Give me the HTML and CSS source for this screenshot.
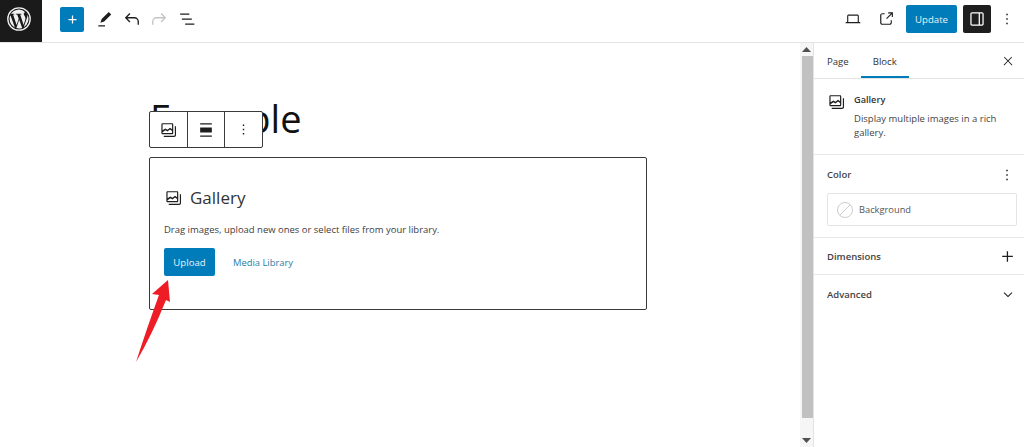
FILE: index.html
```html
<!DOCTYPE html>
<html lang="en">
<head>
<meta charset="utf-8">
<title>Example</title>
<link rel="stylesheet" href="styles.css">
</head>
<body>
<div class="app">
  <header class="topbar">
    <div class="topbar-left">
      <a class="wp-logo">
        <svg viewBox="0 0 24 24" width="24" height="24"><circle cx="12" cy="12" r="11.2" fill="none" stroke="#f0f0f0" stroke-width="1.3"/><path fill="#f0f0f0" d="M2.6 12c0 3.7 2.2 6.9 5.3 8.5L3.4 8.2A9.4 9.4 0 0 0 2.6 12zm15.8-.5c0-1.200-.4-2-.8-2.600-.5-.8-.9-1.400-.9-2.100 0-.8.6-1.600 1.500-1.600h.1A9.400 9.400 0 0 0 4 6.800h.6c1 0 2.500-.1 2.500-.1.500 0 .6.700.1.800 0 0-.5.100-1.100.1l3.500 10.300 2.100-6.200-1.500-4.100c-.5 0-1-.1-1-.1-.5 0-.5-.8 0-.8 0 0 1.600.1 2.500.1 1 0 2.500-.1 2.500-.1.500 0 .6.700.1.800 0 0-.5.100-1.100.1l3.400 10.300 1-3.200c.4-1.300.8-2.200.8-3zm-6.200 1.300-2.800 8.300a9.400 9.400 0 0 0 5.800-.2l-.1-.1zm8.100-5.400.1 1c0 .9-.2 2-.7 3.300l-2.900 8.300A9.400 9.400 0 0 0 20.300 7.400z"/></svg>
      </a>
      <div class="tools">
        <button class="inserter"><svg viewBox="0 0 24 24" width="15" height="15"><path fill="#fff" d="M11 5.500h2V11h5.500v2H13v5.500h-2V13H5.500v-2H11z"/></svg></button>
        <button class="icon-btn"><svg viewBox="0 0 24 24" width="20" height="20"><path fill="#1e1e1e" d="M19.500 6.500 16.500 3.500 8 12l-1.500 4.500 4.500-1.500zM4 19.500h8V21H4z"/></svg></button>
        <button class="icon-btn"><svg viewBox="0 0 24 24" width="20" height="20"><path fill="none" stroke="#1e1e1e" stroke-width="1.600" d="M9.500 5.500 4.500 10.500l5 5M4.500 10.500H15a4.500 4.500 0 0 1 4.500 4.500v4"/></svg></button>
        <button class="icon-btn"><svg viewBox="0 0 24 24" width="20" height="20"><path fill="none" stroke="#c4c4c4" stroke-width="1.600" d="M14.500 5.500l5 5-5 5M19.500 10.500H9A4.500 4.500 0 0 0 4.500 15v4"/></svg></button>
        <button class="icon-btn"><svg viewBox="0 0 24 24" width="20" height="20"><path fill="#1e1e1e" d="M5 5.300h11v1.500H5zM7 11.300h12v1.500H7zM11 17.300h11v1.500H11z"/></svg></button>
      </div>
    </div>
    <div class="topbar-right">
      <button class="icon-btn wide"><svg viewBox="0 0 24 24" width="18" height="18"><path fill="#1e1e1e" d="M20.500 16h-.7V8c0-1.100-.9-2-2-2H6.200c-1.100 0-2 .9-2 2v8h-.7c-.8 0-1.500.7-1.500 1.500h20c0-.8-.7-1.500-1.500-1.500zM5.700 8c0-.3.200-.5.500-.5h11.600c.3 0 .5.200.5.500v8H5.700z"/></svg></button>
      <button class="icon-btn wide"><svg viewBox="0 0 24 24" width="18" height="18"><path fill="#1e1e1e" d="M18.200 17c0 .7-.6 1.200-1.200 1.200H7c-.7 0-1.200-.6-1.200-1.200V7c0-.7.600-1.200 1.200-1.200h3.200V4.200H7C5.500 4.200 4.200 5.500 4.200 7v10c0 1.500 1.300 2.800 2.800 2.800h10c1.500 0 2.800-1.300 2.800-2.800v-3.200h-1.500V17zM14.900 3v1.500h3.700l-6.400 6.400 1.100 1.100 6.400-6.400v3.700h1.500V3z"/></svg></button>
      <button class="primary update">Update</button>
      <button class="settings"><svg viewBox="0 0 24 24" width="20" height="20"><path fill="#fff" d="M18 4H6c-1.100 0-2 .9-2 2v12c0 1.100.9 2 2 2h12c1.100 0 2-.9 2-2V6c0-1.100-.9-2-2-2zM5.500 18V6c0-.3.200-.5.500-.5h8v13H6c-.3 0-.5-.2-.5-.5zm13 0c0 .3-.2.500-.5.500h-2.500v-13H18c.3 0 .5.200.5.500z"/></svg></button>
      <button class="icon-btn kebab"><svg viewBox="0 0 24 24" width="18" height="18"><path fill="#1e1e1e" d="M13 19h-2v-2h2zm0-6h-2v-2h2zm0-6h-2V5h2z"/></svg></button>
    </div>
  </header>

  <div class="workspace">
    <main class="canvas">
      <h1 class="post-title">Example</h1>
      <div class="block-toolbar">
        <button class="tool"><svg viewBox="0 0 24 24" width="19" height="19"><path fill="#1e1e1e" d="M16.400 4H4.600C3.700 4 3 4.700 3 5.600v10.800c0 .9.700 1.600 1.600 1.600h11.800c.9 0 1.600-.7 1.600-1.600V5.600c0-.9-.7-1.600-1.600-1.600zM4.500 5.600c0-.1 0-.1.100-.1h11.800c.1 0 .1 0 .1.100v6l-2.600-1.900-3.200 2.600-2.600-1.700-3.600 2.500zm11.900 10.900H4.600c-.1 0-.1 0-.1-.1v-1l3.700-2.600 2.500 1.700 3.200-2.600 2.600 1.900v2.600c0 .1 0 .1-.1.100zM20 8v11c0 .6-.4 1-1 1H6v1.500h13c1.400 0 2.500-1.100 2.500-2.500V8z"/></svg></button>
        <button class="tool"><svg viewBox="0 0 24 24" width="20" height="20"><path fill="#1e1e1e" d="M5 4h14v1.500H5zM5 9h14v6H5zM5 18.500h14V20H5z"/></svg></button>
        <button class="tool"><svg viewBox="0 0 24 24" width="17" height="17"><path fill="#1e1e1e" d="M13 19h-2v-2h2zm0-6h-2v-2h2zm0-6h-2V5h2z"/></svg></button>
      </div>
      <section class="placeholder">
        <div class="placeholder-label">
          <svg viewBox="0 0 24 24" width="19" height="19"><path fill="#1e1e1e" d="M16.400 4H4.600C3.700 4 3 4.700 3 5.600v10.800c0 .9.700 1.600 1.600 1.600h11.800c.9 0 1.600-.7 1.600-1.600V5.600c0-.9-.7-1.600-1.600-1.600zM4.500 5.600c0-.1 0-.1.100-.1h11.800c.1 0 .1 0 .1.100v6l-2.600-1.900-3.200 2.600-2.600-1.700-3.600 2.500zm11.900 10.900H4.600c-.1 0-.1 0-.1-.1v-1l3.700-2.600 2.500 1.700 3.200-2.600 2.600 1.900v2.600c0 .1 0 .1-.1.100zM20 8v11c0 .6-.4 1-1 1H6v1.500h13c1.400 0 2.500-1.100 2.500-2.500V8z"/></svg>
          <span>Gallery</span>
        </div>
        <p class="placeholder-text">Drag images, upload new ones or select files from your library.</p>
        <div class="placeholder-actions">
          <button class="primary upload">Upload</button>
          <a class="link">Media Library</a>
        </div>
      </section>
      <svg class="arrow" viewBox="0 0 50 100" width="50" height="100"><path fill="#ee1c25" d="M2 87 Q14 50 25 20 L18 19 L34 5 L36 27 L32 25 Q18 60 2 87Z"/></svg>
    </main>

    <div class="scrollbar">
      <div class="scroll-btn"><svg viewBox="0 0 9 5" width="9" height="5"><path fill="#505050" d="M4.500 0 9 5H0z"/></svg></div>
      <div class="scroll-track"><div class="scroll-thumb"></div></div>
      <div class="scroll-btn"><svg viewBox="0 0 9 5" width="9" height="5"><path fill="#505050" d="M0 0h9L4.500 5z"/></svg></div>
    </div>

    <aside class="sidebar">
      <div class="tabs">
        <div class="tab-group">
          <span class="tab">Page</span>
          <span class="tab active">Block</span>
        </div>
        <svg viewBox="0 0 24 24" width="14" height="14"><path fill="#1e1e1e" d="m13 11.800 6.100-6.300-1-1-6.100 6.200-6.100-6.200-1 1 6.100 6.300-6.500 6.700 1 1 6.500-6.600 6.500 6.600 1-1z"/></svg>
      </div>
      <div class="panel block-card">
        <svg viewBox="0 0 24 24" width="19" height="19"><path fill="#1e1e1e" d="M16.400 4H4.600C3.700 4 3 4.700 3 5.600v10.800c0 .9.700 1.600 1.600 1.600h11.800c.9 0 1.600-.7 1.600-1.600V5.600c0-.9-.7-1.600-1.600-1.600zM4.500 5.600c0-.1 0-.1.100-.1h11.800c.1 0 .1 0 .1.100v6l-2.600-1.900-3.200 2.600-2.600-1.700-3.600 2.500zm11.900 10.900H4.600c-.1 0-.1 0-.1-.1v-1l3.700-2.600 2.500 1.700 3.200-2.600 2.600 1.900v2.600c0 .1 0 .1-.1.100zM20 8v11c0 .6-.4 1-1 1H6v1.500h13c1.400 0 2.500-1.100 2.500-2.500V8z"/></svg>
        <div class="card-body">
          <div class="card-title">Gallery</div>
          <div class="card-desc">Display multiple images in a rich gallery.</div>
        </div>
      </div>
      <div class="panel color">
        <div class="panel-head">
          <span class="panel-title">Color</span>
          <svg viewBox="0 0 24 24" width="18" height="18"><path fill="#1e1e1e" d="M13 19h-2v-2h2zm0-6h-2v-2h2zm0-6h-2V5h2z"/></svg>
        </div>
        <div class="color-item">
          <svg viewBox="0 0 16 16" width="16" height="16"><circle cx="8" cy="8" r="7.500" fill="none" stroke="#ccc"/><path stroke="#ccc" d="M3 13 13 3"/></svg>
          <span>Background</span>
        </div>
      </div>
      <div class="panel row dimensions">
        <span class="panel-title">Dimensions</span>
        <svg viewBox="0 0 24 24" width="17" height="17"><path fill="#1e1e1e" d="M11 4.500h1.800V11h6.700v1.800h-6.700v6.700H11v-6.700H4.500V11H11z"/></svg>
      </div>
      <div class="panel row advanced">
        <span class="panel-title">Advanced</span>
        <svg viewBox="0 0 24 24" width="16" height="16"><path fill="#1e1e1e" d="M17.500 9.500 12 14.700 6.500 9.500l-1 1.100 6.500 6.100 6.500-6.100z"/></svg>
      </div>
    </aside>
  </div>
</div>
</body>
</html>
```
FILE: styles.css
```css
* { box-sizing: border-box; }
html, body { margin: 0; height: 100%; overflow: hidden; background: #fff; }
body { font-family: "Open Sans", "Noto Sans", sans-serif; color: #1e1e1e; font-size: 9.400px; }
button { font-family: inherit; border: 0; background: none; padding: 0; margin: 0; }
svg { display: block; flex: none; }

.app { display: flex; flex-direction: column; width: 1024px; height: 447px; }

.topbar { height: 43px; flex: none; display: flex; justify-content: space-between; align-items: center; border-bottom: 1px solid #e4e4e4; }
.topbar-left { display: flex; align-items: center; height: 42px; }
.topbar-right { display: flex; align-items: center; height: 42px; padding-bottom: 4px; }
.tools { display: flex; align-items: center; height: 42px; padding-bottom: 4px; }
.wp-logo { width: 42px; height: 42px; padding: 0 5px 5px 0; background: #1a1a1a; display: flex; align-items: center; justify-content: center; }
.inserter { width: 24px; height: 25px; margin-left: 18px; margin-right: 7px; background: #007cba; border-radius: 2px; display: flex; align-items: center; justify-content: center; }
.icon-btn { width: 27px; height: 27px; display: flex; align-items: center; justify-content: center; }
.icon-btn.wide { width: 33px; }
.primary { background: #007cba; color: #e8f3f9; border-radius: 2px; }
.update { width: 51px; height: 28px; font-size: 9.600px; margin-left: 4px; }
.settings { width: 28px; height: 28px; margin-left: 6px; background: #1e1e1e; border-radius: 2px; display: flex; align-items: center; justify-content: center; }
.kebab { width: 20px; margin-left: 6px; margin-right: 7px; }

.workspace { flex: 1; display: flex; min-height: 0; }

.canvas { position: relative; flex: 1; min-width: 0; padding: 45px 0 0 149px; overflow: hidden; }
.post-title { margin: 0 0 0 1px; font-size: 38px; line-height: 60px; font-weight: 400; color: #111; }
.placeholder { width: 498px; height: 153px; margin-top: 9px; border: 1px solid #3a3a3a; border-radius: 2px; padding: 27px 14px 0; }
.placeholder-label { display: flex; align-items: center; gap: 7px; height: 24px; font-size: 17px; color: #333; }
.placeholder-text { margin: 13px 0 0; font-size: 9.470px; line-height: 16px; color: #404040; }
.placeholder-actions { display: flex; align-items: center; margin-top: 10px; }
.upload { width: 51px; height: 28px; font-size: 9.600px; }
.link { margin-left: 18px; font-size: 9.400px; color: #2b7ea8; }

.block-toolbar { position: absolute; left: 149px; top: 68px; width: 114px; height: 37px; display: flex; background: #fff; border: 1px solid #3a3a3a; border-radius: 2px; }
.tool { flex: 1; display: flex; align-items: center; justify-content: center; border-right: 1px solid #3a3a3a; }
.tool:last-child { border-right: 0; }
.arrow { position: absolute; left: 134px; top: 232px; }

.scrollbar { width: 13px; flex: none; display: flex; flex-direction: column; background: #f6f6f6; }
.scroll-btn { height: 13px; flex: none; display: flex; align-items: center; justify-content: center; }
.scroll-track { flex: 1; }
.scroll-thumb { height: 362px; background: #c1c1c1; margin-left: 2px; }

.sidebar { width: 211px; flex: none; border-left: 1px solid #e4e4e4; background: #fff; }
.tabs { height: 36px; display: flex; align-items: center; justify-content: space-between; padding: 0 9px 0 1px; border-bottom: 1px solid #e4e4e4; }
.tab-group { display: flex; height: 35px; }
.tab { display: flex; align-items: center; padding: 1px 12px 0; font-size: 9.600px; font-weight: 500; color: #333; }
.tab.active { box-shadow: inset 0 -2px 0 #007cba; }

.panel { border-bottom: 1px solid #e8e8e8; padding: 0 8px 0 13px; }
.block-card { height: 76px; display: flex; gap: 8px; padding-top: 13px; }
.card-title { font-size: 9.200px; font-weight: 600; line-height: 16px; color: #333; }
.card-desc { font-size: 9.500px; line-height: 14px; margin-top: 4px; width: 150px; color: #444; }
.color { height: 83px; }
.panel-head { height: 38px; padding-top: 1px; display: flex; align-items: center; justify-content: space-between; }
.panel-title { font-size: 9.500px; font-weight: 600; color: #444; }
.color-item { width: 190px; height: 33px; border: 1px solid #e4e4e4; border-radius: 2px; display: flex; align-items: center; gap: 6px; padding-left: 9px; font-size: 9.300px; color: #555; }
.row { display: flex; align-items: center; justify-content: space-between; }
.dimensions { height: 37px; padding-top: 1px; }
.advanced { height: 38px; border-bottom: 0; }
```
